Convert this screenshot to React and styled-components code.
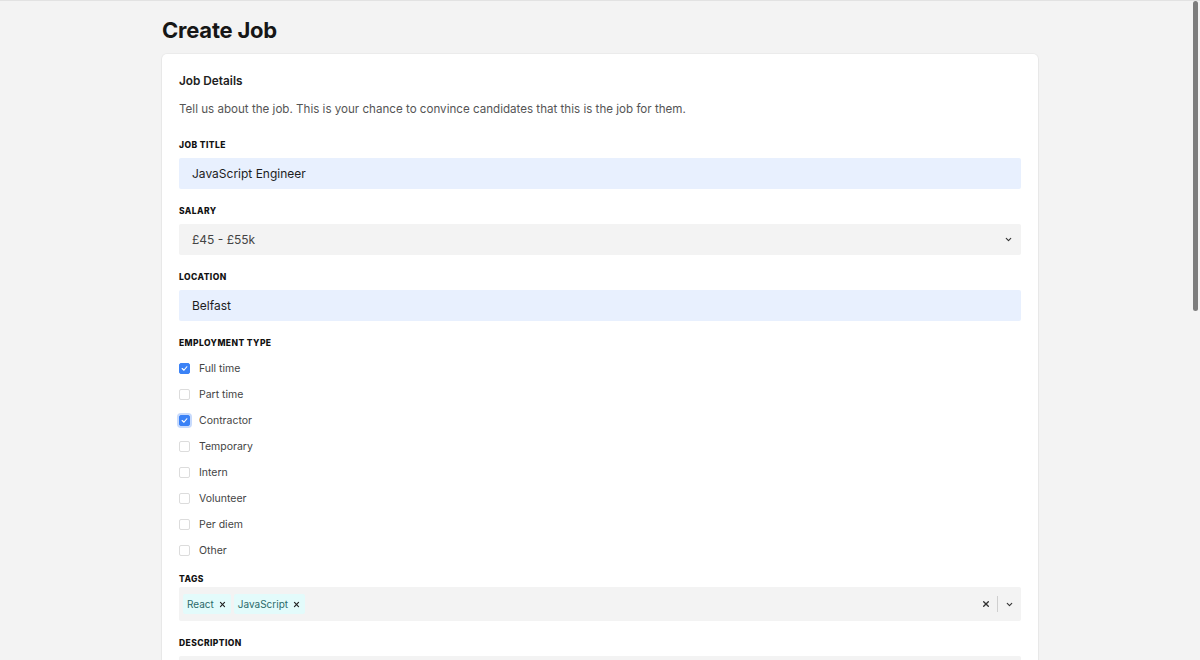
import React from 'react';
import styled, { createGlobalStyle } from 'styled-components';

const GlobalStyle = createGlobalStyle`
  html, body {
    margin: 0;
    padding: 0;
    background: #f3f3f3;
    font-family: Inter, "Noto Sans", "Liberation Sans", sans-serif;
    -webkit-font-smoothing: antialiased;
  }
  html::-webkit-scrollbar { display: none; }
  html { scrollbar-width: none; }
  * { box-sizing: border-box; }
`;

const Page = styled.div`
  border-top: 1px solid #e2e2e2;
  padding: 13px 0 40px;
`;

const Container = styled.div`
  max-width: 876px;
  margin: 0 auto;
`;

const Title = styled.h1`
  margin: 0 0 8px;
  font-size: 22px;
  line-height: 32px;
  font-weight: 700;
  color: #161616;
  letter-spacing: -0.01em;
`;

const Card = styled.div`
  background: #fff;
  border-radius: 5px;
  box-shadow: 0 0 0 1px rgba(0, 0, 0, 0.03), 0 1px 2px rgba(0, 0, 0, 0.05);
  padding: 17px 17px 24px;
`;

const CardHeading = styled.h2`
  margin: 0 0 8px;
  font-size: 11.8px;
  line-height: 20px;
  font-weight: 600;
  color: #222;
`;

const Intro = styled.p`
  margin: 0 0 20px;
  font-size: 11.6px;
  line-height: 20px;
  color: #555;
`;

const Field = styled.div`
  margin-bottom: ${p => p.$gap || 16}px;
`;

const Label = styled.div`
  font-size: 8.5px;
  line-height: 12px;
  font-weight: 800;
  letter-spacing: 0.05em;
  text-transform: uppercase;
  color: #111;
  margin-bottom: ${p => p.$gap ?? 7}px;
`;

const TextInput = styled.div`
  height: 31px;
  border-radius: 2px;
  background: ${p => (p.$filled ? '#e8f0fe' : '#f3f3f3')};
  padding: 0 8px 0 13px;
  display: flex;
  align-items: center;
  justify-content: space-between;
  font-size: 12px;
  color: ${p => (p.$filled ? '#1d1d1d' : '#444')};
`;

const Chevron = () => (
  <svg width="9" height="9" viewBox="0 0 24 24" fill="none" stroke="#333" strokeWidth="3" strokeLinecap="round" strokeLinejoin="round">
    <polyline points="6 9 12 15 18 9" />
  </svg>
);

const CrossIcon = ({ size = 8, color = '#222' }) => (
  <svg width={size} height={size} viewBox="0 0 24 24" fill="none" stroke={color} strokeWidth="4" strokeLinecap="round">
    <line x1="5" y1="5" x2="19" y2="19" />
    <line x1="19" y1="5" x2="5" y2="19" />
  </svg>
);

const CheckList = styled.div`
  display: flex;
  flex-direction: column;
`;

const CheckRow = styled.label`
  height: 26px;
  display: flex;
  align-items: center;
  gap: 9px;
  font-size: 10.5px;
  color: #444;
`;

const Box = styled.span`
  width: 11px;
  height: 11px;
  border-radius: 2px;
  display: inline-flex;
  align-items: center;
  justify-content: center;
  background: ${p => (p.$checked ? '#3b82f6' : '#fff')};
  border: 1px solid ${p => (p.$checked ? '#3b82f6' : '#dcdcdc')};
  box-shadow: ${p => (p.$focus ? '0 0 0 2px #c7dafc' : 'none')};
`;

const SelectControl = styled.div`
  min-height: 34px;
  border-radius: 2px;
  background: #f3f3f3;
  display: flex;
  align-items: center;
  padding: 0 7px 0 4px;
`;

const TagList = styled.div`
  flex: 1;
  display: flex;
  gap: 3px;
`;

const Tag = styled.span`
  display: inline-flex;
  align-items: center;
  gap: 5px;
  height: 20px;
  padding: 0 5px 0 4px;
  border-radius: 2px;
  background: #e3fbfb;
  color: #2c6a6a;
  font-size: 10px;
`;

const Indicators = styled.div`
  display: flex;
  align-items: center;
  gap: 7px;
`;

const Separator = styled.span`
  width: 1px;
  height: 16px;
  background: #cfcfcf;
`;

const TextArea = styled.div`
  height: 140px;
  border-radius: 2px;
  background: #f3f3f3;
`;

const Scrollbar = styled.div`
  position: fixed;
  top: 1px;
  right: 2px;
  width: 5px;
  height: 310px;
  border-radius: 3px;
  background: #7d7d7d;
`;

const employmentTypes = [
  { name: 'Full time', checked: true },
  { name: 'Part time' },
  { name: 'Contractor', checked: true, focus: true },
  { name: 'Temporary' },
  { name: 'Intern' },
  { name: 'Volunteer' },
  { name: 'Per diem' },
  { name: 'Other' },
];

const CheckMark = () => (
  <svg width="7" height="7" viewBox="0 0 24 24" fill="none" stroke="#fff" strokeWidth="4" strokeLinecap="round" strokeLinejoin="round">
    <polyline points="4 12 10 18 20 6" />
  </svg>
);

const App = () => {
  return (
    <Page>
      <GlobalStyle />
      <Container>
        <Title>Create Job</Title>
        <Card>
          <CardHeading>Job Details</CardHeading>
          <Intro>Tell us about the job. This is your chance to convince candidates that this is the job for them.</Intro>

          <Field>
            <Label>Job Title</Label>
            <TextInput $filled>JavaScript Engineer</TextInput>
          </Field>

          <Field>
            <Label>Salary</Label>
            <TextInput>
              £45 - £55k
              <Chevron />
            </TextInput>
          </Field>

          <Field>
            <Label>Location</Label>
            <TextInput $filled>Belfast</TextInput>
          </Field>

          <Field $gap={10}>
            <Label $gap={6}>Employment Type</Label>
            <CheckList>
              {employmentTypes.map(type => (
                <CheckRow key={type.name}>
                  <Box $checked={type.checked} $focus={type.focus}>
                    {type.checked && <CheckMark />}
                  </Box>
                  {type.name}
                </CheckRow>
              ))}
            </CheckList>
          </Field>

          <Field>
            <Label $gap={2}>Tags</Label>
            <SelectControl>
              <TagList>
                <Tag>
                  React <CrossIcon size={7} />
                </Tag>
                <Tag>
                  JavaScript <CrossIcon size={7} />
                </Tag>
              </TagList>
              <Indicators>
                <CrossIcon size={8} color="#333" />
                <Separator />
                <Chevron />
              </Indicators>
            </SelectControl>
          </Field>

          <Field>
            <Label>Description</Label>
            <TextArea />
          </Field>
        </Card>
      </Container>
      <Scrollbar />
    </Page>
  );
};

export default App;
